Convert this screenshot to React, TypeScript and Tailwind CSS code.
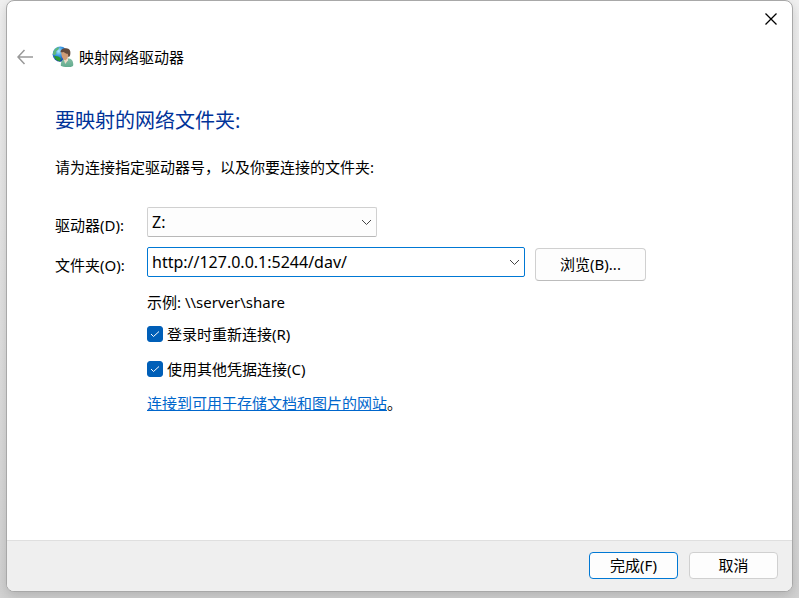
import { useState } from "react";
import type { ReactNode } from "react";

function NetworkUserIcon() {
  return (
    <svg className="h-6 w-6" viewBox="0 0 24 24" aria-hidden="true">
      <defs>
        <radialGradient id="globe" cx="0.4" cy="0.3" r="0.75">
          <stop offset="0" stopColor="#b4ecfc" />
          <stop offset="0.4" stopColor="#3a9ae6" />
          <stop offset="1" stopColor="#0a2a96" />
        </radialGradient>
        <linearGradient id="coat" x1="0" y1="0" x2="0" y2="1">
          <stop offset="0" stopColor="#86bfa6" />
          <stop offset="1" stopColor="#62ab8e" />
        </linearGradient>
      </defs>
      <circle cx="9.200" cy="9.200" r="7.600" fill="url(#globe)" />
      <path d="M2.400 6.500C3.600 3.800 6 2.200 8.400 2l-1 2.600-2.200 1.600.2 2.200-1.600 1.800-1.900-.6z" fill="#5fb87c" />
      <path d="M3 10.800l4.400.6 2.600 2-1 3c-3-.2-5.200-2.400-6-5.600z" fill="#2a9a2f" />
      <path d="M9.800 20.800c-.2-3.600 1-6.200 3.400-6.900l2.600-.9 3.400.8c2.300.9 3.100 3.300 3.100 6.300-.2 1.600-1.800 2-4.300 2-3.700.1-7-.2-8.200-1.300z" fill="url(#coat)" />
      <path d="M12.200 13l2 6 2.800-3.800-.2-2.700z" fill="#eddcc8" />
      <path d="M10.200 7c1.900-.5 6.200-.4 7 .6.5 2.800-.4 6.600-2.700 7.600-2.600-.3-4.200-3.300-4.300-8.200z" fill="#cf9c76" />
      <path d="M9.400 7.200c.3-3 2.600-4.200 5.800-3.900 3.200.3 4.700 2.400 4.100 5.900-.2 1.800-1 2.800-1.900 3.100l-.6-3.500c-1.600-.2-3.100-.9-3.900-1.900-1 .5-2.300.6-3.500.3z" fill="#634a3c" />
    </svg>
  );
}

function Chevron() {
  return (
    <svg
      className="pointer-events-none col-start-1 row-start-1 mr-1 h-3 w-3 self-center justify-self-end"
      viewBox="0 0 12 12"
      fill="none"
      stroke="#444"
      aria-hidden="true"
    >
      <path d="M1 4l4.500 4.500L10 4" />
    </svg>
  );
}

function CheckOption({ id, children }: { id: string; children: ReactNode }) {
  const [checked, setChecked] = useState(true);
  return (
    <div className="flex h-5 items-center gap-1">
      <span className="grid h-4 w-4 place-items-center">
        <input
          id={id}
          type="checkbox"
          checked={checked}
          onChange={(e) => setChecked(e.target.checked)}
          className="peer col-start-1 row-start-1 h-4 w-4 appearance-none rounded-[3px] border border-[#868686] bg-white checked:border-[#005fb8] checked:bg-[#005fb8]"
        />
        <svg
          className="pointer-events-none invisible col-start-1 row-start-1 h-4 w-4 peer-checked:visible"
          viewBox="0 0 16 16"
          fill="none"
          stroke="#fff"
          aria-hidden="true"
        >
          <path d="M4 8l2.500 2.500L12 5.500" />
        </svg>
      </span>
      <label htmlFor={id}>{children}</label>
    </div>
  );
}

export default function App() {
  const [folder, setFolder] = useState("http://127.0.0.1:5244/dav/");
  return (
    <div className="flex min-h-screen flex-col bg-linear-to-b from-[#f0f0f0] via-[#e2e2e2] to-[#d2d2d2] px-1.5 pb-1.5 font-['Noto_Sans','Noto_Sans_CJK_SC',sans-serif] text-[15px] leading-5 text-black">
      <main className="flex flex-1 flex-col overflow-hidden rounded-lg border border-[#a8a8a8] bg-white shadow-[0_4px_12px_rgba(0,0,0,0.15)]">
        <div className="flex h-9 justify-end">
          <button type="button" aria-label="关闭" className="grid w-[42px] place-items-center">
            <svg className="h-3 w-3" viewBox="0 0 12 12" fill="none" stroke="#000" strokeWidth="1.300" aria-hidden="true">
              <path d="M.5.5l11 11M11.500.5l-11 11" />
            </svg>
          </button>
        </div>
        <header className="flex h-10 items-center pl-2">
          <button type="button" aria-label="返回" className="mr-4 grid h-5 w-5 place-items-center">
            <svg className="h-4 w-4" viewBox="0 0 16 16" fill="none" stroke="#999" strokeWidth="1.500" aria-hidden="true">
              <path d="M16 8H1M7.500 1L1 8l6.500 7" />
            </svg>
          </button>
          <NetworkUserIcon />
          <span className="ml-1">映射网络驱动器</span>
        </header>

        <form className="flex flex-1 flex-col" onSubmit={(e) => e.preventDefault()}>
          <div className="flex-1 px-12 pt-7">
            <h1 className="text-xl leading-8 text-[#003399]">要映射的网络文件夹:</h1>
            <p className="mt-5">请为连接指定驱动器号，以及你要连接的文件夹:</p>

            <div className="mt-[30px] grid grid-cols-[92px_1fr] gap-y-2.5">
              <label htmlFor="drive" className="pt-2">驱动器(D):</label>
              <div className="grid w-[230px]">
                <select
                  id="drive"
                  className="col-start-1 row-start-1 h-[30px] appearance-none rounded-xs border border-[#d0d0d0] border-b-[#b8b8b8] bg-[#fdfdfd] px-1 text-base leading-5 outline-none"
                >
                  <option>Z:</option>
                </select>
                <Chevron />
              </div>

              <label htmlFor="folder" className="pt-2">文件夹(O):</label>
              <div className="flex items-start gap-2.5">
                <div className="grid w-[378px]">
                  <input
                    id="folder"
                    type="text"
                    value={folder}
                    onChange={(e) => setFolder(e.target.value)}
                    className="col-start-1 row-start-1 h-[30px] rounded-xs border border-[#0078d4] bg-white px-1 text-base leading-5 outline-none"
                  />
                  <Chevron />
                </div>
                <button type="button" className="mt-px h-[33px] w-[111px] rounded border border-[#d0d0d0] border-b-[#bcbcbc] bg-[#fdfdfd] pb-0.5">
                  浏览(B)...
                </button>
              </div>

              <div className="col-start-2 flex flex-col pt-px">
                <p>示例: \\server\share</p>
                <div className="mt-3 flex flex-col gap-[15px]">
                  <CheckOption id="reconnect">登录时重新连接(R)</CheckOption>
                  <CheckOption id="credentials">使用其他凭据连接(C)</CheckOption>
                </div>
                <p className="mt-3.5">
                  <a href="#website" className="text-[#0066cc] underline">连接到可用于存储文档和图片的网站</a>。
                </p>
              </div>
            </div>
          </div>

          <footer className="flex h-[51px] items-start justify-end gap-[11px] border-t border-[#dfdfdf] bg-[#efefef] pt-[11px] pr-3.5">
            <button type="submit" className="h-[27px] w-[89px] rounded border border-[#0078d4] bg-[#fdfdfd] pb-0.5">完成(F)</button>
            <button type="button" className="h-[27px] w-[89px] rounded border border-[#d0d0d0] bg-[#fdfdfd] pb-0.5">取消</button>
          </footer>
        </form>
      </main>
    </div>
  );
}
